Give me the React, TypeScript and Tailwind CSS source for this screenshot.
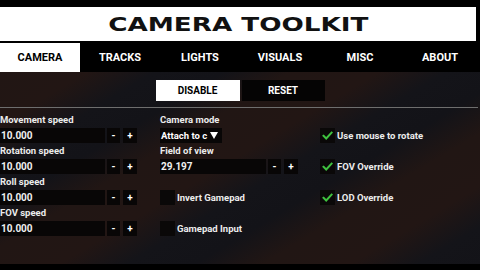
import React from "react";

const font = { fontFamily: "Roboto, 'Liberation Sans', sans-serif" };

function Stepper({ value, w }: { value: string; w: string }) {
  return (
    <div className="flex h-[15px] items-stretch">
      <div className={`${w} bg-[#080606] pl-[1px] flex items-center text-[10px] font-bold text-[#f0f0f0] leading-none`}>{value}</div>
      <div className="ml-[2px] w-[13px] bg-[#080606] flex items-center justify-center text-[10px] font-bold text-white leading-none">-</div>
      <div className="ml-[3px] w-[14px] bg-[#080606] flex items-center justify-center text-[10px] font-bold text-white leading-none">+</div>
    </div>
  );
}

function Label({ text }: { text: string }) {
  return <div className="h-[16px] flex items-center text-[9.5px] font-bold text-[#ececec] leading-none">{text}</div>;
}

function Check({ checked, text }: { checked: boolean; text: string }) {
  return (
    <div className="flex items-center h-[15px]">
      <div className="w-[15px] h-[15px] bg-[#0a0808] flex items-center justify-center">
        {checked && (
          <svg width="11" height="11" viewBox="0 0 11 11">
            <polyline points="1.5,5.8 4.2,8.5 9.6,2.6" fill="none" stroke="#3fc23f" strokeWidth="2" strokeLinecap="square" />
          </svg>
        )}
      </div>
      <span className="ml-[2px] text-[9.5px] font-bold text-[#ececec] leading-none">{text}</span>
    </div>
  );
}

export default function App() {
  const tabs = ["CAMERA", "TRACKS", "LIGHTS", "VISUALS", "MISC", "ABOUT"];
  return (
    <div className="w-[480px] h-[270px] bg-black flex flex-col overflow-hidden" style={font}>
      <div className="pt-[7px]">
        <div className="h-[34px] mr-[4px] bg-white flex items-center justify-center">
          <span
            className="inline-block scale-x-[1.38] text-[19px] font-bold text-[#111] leading-none"
            style={{ fontFamily: "'DejaVu Sans', sans-serif" }}
          >
            CAMERA TOOLKIT
          </span>
        </div>
      </div>
      <div className="mt-[2px] h-[29px] grid grid-cols-6">
        {tabs.map((t, i) => (
          <div
            key={t}
            className={`flex items-center justify-center text-[11px] font-bold leading-none ${i === 0 ? "bg-white text-black" : "text-white"}`}
          >
            {t}
          </div>
        ))}
      </div>
      <div className="flex-1 flex flex-col bg-[repeating-linear-gradient(149deg,#211614_0px,#221614_45px,#141419_80px,#131318_115px,#211614_150px)]">
        <div className="pt-[8px] flex justify-center gap-[2px]">
          <div className="w-[84px] h-[21px] bg-white flex items-center justify-center text-[10px] font-bold text-black leading-none">DISABLE</div>
          <div className="w-[83px] h-[21px] bg-[#050404] flex items-center justify-center text-[10px] font-bold text-white leading-none">RESET</div>
        </div>
        <div className="mt-[6px] h-[1px] mr-[2px] bg-[#6e6e6e]" />
        <div className="mt-[4px] flex">
          <div className="w-[160px] flex flex-col">
            <Label text="Movement speed" />
            <Stepper value="10.000" w="w-[105px]" />
            <Label text="Rotation speed" />
            <Stepper value="10.000" w="w-[105px]" />
            <Label text="Roll speed" />
            <Stepper value="10.000" w="w-[105px]" />
            <Label text="FOV speed" />
            <Stepper value="10.000" w="w-[105px]" />
          </div>
          <div className="w-[160px] flex flex-col">
            <Label text="Camera mode" />
            <div className="h-[15px] w-[62px] bg-[#080606] flex items-center pl-[1px] text-[9.5px] font-bold text-white leading-none">
              <span>Attach to c</span>
              <svg className="ml-[3px]" width="8" height="7" viewBox="0 0 8 7">
                <polygon points="0,0 8,0 4,7" fill="#fff" />
              </svg>
            </div>
            <Label text="Field of view" />
            <Stepper value="29.197" w="w-[106px]" />
            <div className="mt-[16px]">
              <Check checked={false} text="Invert Gamepad" />
            </div>
            <div className="mt-[16px]">
              <Check checked={false} text="Gamepad Input" />
            </div>
          </div>
          <div className="flex flex-col pt-[16px] gap-[16px]">
            <Check checked text="Use mouse to rotate" />
            <Check checked text="FOV Override" />
            <Check checked text="LOD Override" />
          </div>
        </div>
      </div>
      <div className="h-[6px] bg-black" />
    </div>
  );
}
